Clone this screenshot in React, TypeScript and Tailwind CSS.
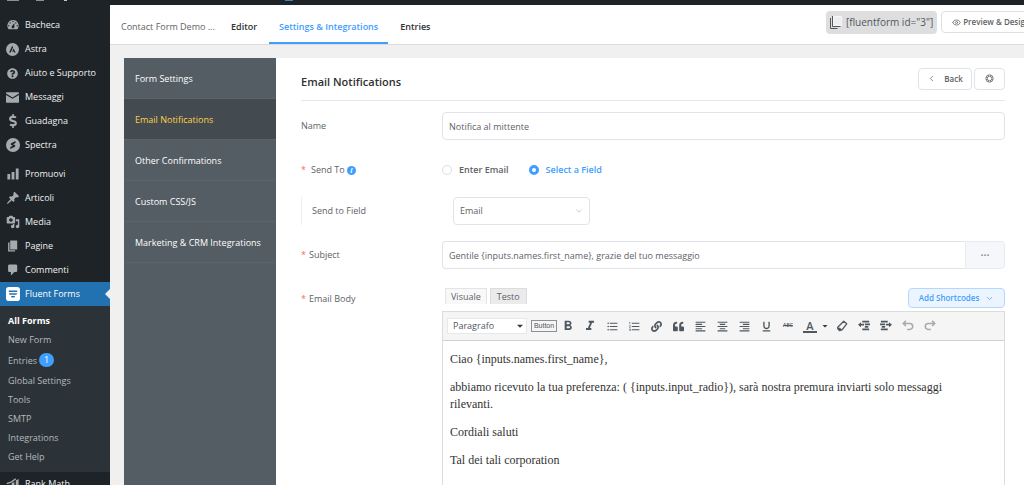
import type { ReactNode } from 'react'
import {
    MdFormatBold,
    MdFormatItalic,
    MdFormatListBulleted,
    MdFormatListNumbered,
    MdFormatAlignLeft,
    MdFormatAlignCenter,
    MdFormatAlignRight,
    MdFormatUnderlined,
    MdArrowDropDown
} from 'react-icons/md'
import { FaQuestionCircle, FaDollarSign, FaLink, FaQuoteLeft } from 'react-icons/fa'
import { LuChevronDown, LuChevronLeft, LuEye } from 'react-icons/lu'

const Dash = ({ d }: { d: string }) => (
    <svg viewBox="0 0 20 20" className="w-[14px] h-[14px]" fill="currentColor">
        <path d={d} />
    </svg>
)

const dashboardPath = 'M3.76 16h12.48A7.998 7.998 0 0 0 10 3a7.998 7.998 0 0 0-6.24 13zM10 4c.55 0 1 .45 1 1s-.45 1-1 1-1-.45-1-1 .45-1 1-1zM6 6c.55 0 1 .45 1 1s-.45 1-1 1-1-.45-1-1 .45-1 1-1zm8 0c.55 0 1 .45 1 1s-.45 1-1 1-1-.45-1-1 .45-1 1-1zm-5.37 5.55L12 7v6c0 1.1-.9 2-2 2s-2-.9-2-2c0-.57.24-1.08.63-1.45zM4 10c.55 0 1 .45 1 1s-.45 1-1 1-1-.45-1-1 .45-1 1-1zm12 0c.55 0 1 .45 1 1s-.45 1-1 1-1-.45-1-1 .45-1 1-1z'
const pinPath = 'M10.44 3.02l1.82-1.82 6.36 6.35-1.83 1.82c-1.05-.68-2.48-.57-3.41.36l-.75.75c-.92.93-1.04 2.35-.35 3.41l-1.83 1.82-2.41-2.41-2.8 2.79c-.42.42-3.38 2.71-3.8 2.29s1.86-3.39 2.28-3.81l2.79-2.79L4.1 9.36l1.83-1.82c1.05.69 2.48.57 3.4-.36l.75-.75c.93-.92 1.05-2.35.36-3.41z'
const mediaPath = 'M13 11V4c0-.55-.45-1-1-1h-1.67L9 1H5L3.67 3H2c-.55 0-1 .45-1 1v7c0 .55.45 1 1 1h10c.55 0 1-.45 1-1zM7 4.5c1.38 0 2.5 1.12 2.5 2.5S8.38 9.5 7 9.5 4.5 8.38 4.5 7 5.62 4.5 7 4.5zM14 6h5v10.5c0 1.38-1.12 2.5-2.5 2.5S14 17.88 14 16.5s1.12-2.5 2.5-2.5c.17 0 .34.02.5.05V9h-3V6zm-4 8.05V13h2v3.5c0 1.38-1.12 2.5-2.5 2.5S7 17.88 7 16.5 8.12 14 9.5 14c.17 0 .34.02.5.05z'

const astraIcon = (
    <svg viewBox="0 0 20 20" className="w-[13px] h-[13px]">
        <circle cx="10" cy="10" r="10" fill="currentColor" />
        <path d="M9.6 3.8 4.8 14.6h2.5l3.5-7.8zM11.6 8.6l-2.1 4.4h2.2l.7 1.6h2.4z" fill="#1d2327" />
    </svg>
)

const spectraIcon = (
    <svg viewBox="0 0 20 20" className="w-[14px] h-[14px]">
        <circle cx="10" cy="10" r="10" fill="currentColor" />
        <path d="M13.6 4.2 8 7c-1.6.9-1.6 2.6 0 3.2l2.2.7-4 1.9v3l5.8-2.9c1.7-.9 1.7-2.6 0-3.2l-2.2-.7 3.8-1.9z" fill="#1d2327" />
    </svg>
)

const fluentIcon = (
    <svg viewBox="0 0 20 20" className="w-[14px] h-[14px]">
        <rect width="20" height="20" rx="4" fill="#fff" />
        <path d="M4 5h12v2H4zM4 9h12l-1.2 2H5.2zM7 13h6l-1.2 2H8.2z" fill="#2271b1" />
    </svg>
)

const rankMathIcon = (
    <svg viewBox="0 0 20 20" className="w-[14px] h-[14px]" fill="currentColor">
        <path d="M2 12l4-1v7H2zM8 9l4-2v11H8zM14 5l4-2v15h-4z" />
        <path d="M1 9.500 8 7l6-4.500" fill="none" stroke="currentColor" strokeWidth="2" />
    </svg>
)

const mainMenu = [
    { label: 'Bacheca', icon: <Dash d={dashboardPath} /> },
    { label: 'Astra', icon: astraIcon },
    { label: 'Aiuto e Supporto', icon: <FaQuestionCircle size={11} /> },
    { label: 'Messaggi', icon: (
        <svg viewBox="0 0 20 16" className="w-[13px] h-[11px]" fill="currentColor">
            <path d="M1 0h18a1 1 0 0 1 1 1v1l-10 6L0 2V1a1 1 0 0 1 1-1zM0 4l10 6 10-6v11a1 1 0 0 1-1 1H1a1 1 0 0 1-1-1z" />
        </svg>
    ) },
    { label: 'Guadagna', icon: <FaDollarSign size={14} /> },
    { label: 'Spectra', icon: spectraIcon }
]

const contentMenu = [
    { label: 'Promuovi', icon: <Dash d="M18 18V2h-4v16h4zm-6 0V7H8v11h4zm-6 0v-8H2v8h4z" /> },
    { label: 'Articoli', icon: <Dash d={pinPath} /> },
    { label: 'Media', icon: <Dash d={mediaPath} /> },
    { label: 'Pagine', icon: <Dash d="M6 15V2h10v13H6zm-1 1h8v2H3V5h2v11z" /> },
    { label: 'Commenti', icon: <Dash d="M5 2h9c1.1 0 2 .9 2 2v7c0 1.1-.9 2-2 2h-2l-5 5v-5H5c-1.1 0-2-.9-2-2V4c0-1.1.9-2 2-2z" /> }
]

const subMenu = ['All Forms', 'New Form', 'Entries', 'Global Settings', 'Tools', 'SMTP', 'Integrations', 'Get Help']

const settingsMenu = ['Form Settings', 'Email Notifications', 'Other Confirmations', 'Custom CSS/JS', 'Marketing & CRM Integrations']

function MenuItem({ label, icon }: { label: string; icon: ReactNode }) {
    return (
        <a href="#" className="flex items-center h-6 pl-1 text-[#f0f0f1]">
            <span className="w-[17px] mr-1 flex justify-center text-[#a7aaad]">{icon}</span>
            {label}
        </a>
    )
}

function AdminBar() {
    return (
        <div className="flex items-start h-[5px] shrink-0 pl-[7px] bg-[#1d2327]">
            <span className="w-3 h-px mr-[17px] bg-[#8c8f94]"></span>
            <span className="w-2 h-px mr-5 bg-[#8c8f94]"></span>
            <span className="w-[3px] h-px mr-[218px] bg-[#c3c4c7]"></span>
            <span className="w-2 h-px bg-[#3d7fb5]"></span>
        </div>
    )
}

function AdminMenu() {
    return (
        <nav className="w-[110px] shrink-0 pt-2 bg-[#1d2327] text-[9px] whitespace-nowrap">
            {mainMenu.map((item) => <MenuItem key={item.label} {...item} />)}
            <div className="h-[5px]"></div>
            {contentMenu.map((item) => <MenuItem key={item.label} {...item} />)}

            <a href="#" className="relative flex items-center h-6 pl-1 bg-[#2271b1] text-white">
                <span className="w-[17px] mr-1 flex justify-center">{fluentIcon}</span>
                Fluent Forms
                <span className="absolute right-0 top-[7px] border-y-5 border-r-5 border-y-transparent border-r-[#f0f0f1]"></span>
            </a>
            <div className="bg-[#2c3338] pt-[5px] pb-[6px] pl-2 leading-[19px] text-[#b4b9be]">
                {subMenu.map((label, index) => (
                    <a key={label} href="#" className={`flex items-center ${index === 0 ? 'font-bold text-white' : ''}`}>
                        {label}
                        {label === 'Entries' && (
                            <span className="my-1 ml-[2px] px-[5px] rounded-full bg-[#409eff] text-white leading-[14px]">1</span>
                        )}
                    </a>
                ))}
            </div>
            <MenuItem label="Rank Math" icon={rankMathIcon} />
        </nav>
    )
}

function TopBar() {
    return (
        <header className="flex h-10 shrink-0 bg-white border-b border-[#dcdcde] overflow-hidden whitespace-nowrap text-[9px]">
            <span className="w-[109px] shrink-0 pl-[11px] pt-1 self-center text-[#606266]">Contact Form Demo ...</span>
            <nav className="flex shrink-0 font-semibold text-[#303133]">
                <a href="#" className="flex items-center px-3 pt-1">Editor</a>
                <a href="#" className="flex items-center px-[10px] pt-[6px] text-[#409eff] border-b-2 border-[#409eff]">Settings &amp; Integrations</a>
                <a href="#" className="flex items-center px-3 pt-1">Entries</a>
            </nav>
            <div className="flex items-start gap-1 ml-auto -mr-[17px] pt-[6px] shrink-0">
                <button className="flex items-center h-[23px] px-1 rounded-sm bg-[#dedede] text-[10px] text-[#50575e]">
                    <svg viewBox="0 0 12 13" className="w-3 h-[13px] mr-1" fill="none" stroke="#50575e">
                        <path d="M3.5.5h8v9h-8z" fill="#eee" stroke="#f6f6f6" />
                        <path d="M2.500 0v10.500h8M.5 2v10.500h7" />
                    </svg>
                    [fluentform id="3"]
                </button>
                <button className="flex items-center h-[22px] px-[10px] border border-[#dcdfe6] rounded-sm text-[8px] font-semibold text-[#606266]">
                    <LuEye size={9} className="mr-[2px]" />
                    Preview &amp; Design
                </button>
            </div>
        </header>
    )
}

function Label({ htmlFor, required, children }: { htmlFor?: string; required?: boolean; children: ReactNode }) {
    return (
        <label htmlFor={htmlFor} className="w-[141px] shrink-0 flex items-center">
            {required && <span className="mr-[3px] text-[#f56c6c]">*</span>}
            {children}
        </label>
    )
}

const toolbar = [
    { name: 'Bold', icon: <MdFormatBold size={16} /> },
    { name: 'Italic', icon: <MdFormatItalic size={16} /> },
    { name: 'Bulleted list', icon: <MdFormatListBulleted size={13} /> },
    { name: 'Numbered list', icon: <MdFormatListNumbered size={13} /> },
    { name: 'Link', icon: <FaLink size={11} /> },
    { name: 'Blockquote', icon: <FaQuoteLeft size={11} /> },
    { name: 'Align left', icon: <MdFormatAlignLeft size={13} /> },
    { name: 'Align center', icon: <MdFormatAlignCenter size={13} /> },
    { name: 'Align right', icon: <MdFormatAlignRight size={13} /> },
    { name: 'Underline', icon: <MdFormatUnderlined size={13} /> },
    { name: 'Strikethrough', icon: <span className="text-[5px] font-semibold line-through">ABC</span> },
    { name: 'Text color', icon: <span className="w-[14px] border-b-2 text-[11px] leading-[11px] font-semibold text-center">A</span> }
]

const toolbarEnd = [
    { name: 'Clear formatting', icon: (
        <svg viewBox="0 0 14 14" className="w-3 h-3" fill="none" stroke="currentColor" strokeWidth="1.500" strokeLinejoin="round">
            <path d="M9 1.500 12.500 4.500 7 11.500 4 12.500 2 10V8.500z" />
            <path d="M2.500 9.500 6 11.500" strokeWidth="2.500" />
        </svg>
    ) },
    { name: 'Decrease indent', icon: (
        <svg viewBox="0 0 14 14" className="w-3 h-3" fill="currentColor">
            <path d="M5 1h8v2H5zM8 4h6v2H8zM8 7h4v2H8zM5 10h8v2H5zM0 5.500 3.500 2.500v2H7v2H3.500v2z" />
        </svg>
    ) },
    { name: 'Increase indent', icon: (
        <svg viewBox="0 0 14 14" className="w-3 h-3" fill="currentColor">
            <path d="M1 1h8v2H1zM0 4h6v2H0zM2 7h4v2H2zM1 10h8v2H1zM14 5.500 10.500 2.500v2H7v2h3.500v2z" />
        </svg>
    ) },
    { name: 'Undo', icon: (
        <svg viewBox="0 0 14 14" className="w-3 h-3 text-[#a7aaad]" fill="none" stroke="currentColor" strokeWidth="1.800">
            <path d="M4.500 1 1.500 4l3 3M1.500 4H9a3.500 3.500 0 0 1 0 7H6" />
        </svg>
    ) },
    { name: 'Redo', icon: (
        <svg viewBox="0 0 14 14" className="w-3 h-3 text-[#a7aaad]" fill="none" stroke="currentColor" strokeWidth="1.800">
            <path d="M9.500 1l3 3-3 3M12.500 4H5a3.500 3.500 0 0 0 0 7h3" />
        </svg>
    ) }
]

function ToolButton({ name, icon }: { name: string; icon: ReactNode }) {
    return (
        <button aria-label={name} className="flex w-[22px] shrink-0 items-center justify-center">{icon}</button>
    )
}

function Editor() {
    return (
        <div className="flex-1 flex flex-col border border-[#dcdcde] border-b-0">
            <div className="flex items-center h-[29px] shrink-0 pl-1 bg-[#f5f5f5] border-b border-[#d0d0d2] text-[#50575e]">
                <div className="relative w-20 shrink-0">
                    <select aria-label="Paragraph style" className="w-full h-4 pl-[5px] appearance-none bg-white border border-[#e8e8e8] text-[9px] leading-[14px]">
                        <option>Paragrafo</option>
                    </select>
                    <MdArrowDropDown size={14} className="absolute right-0 top-px pointer-events-none text-[#32373c]" />
                </div>
                <button className="ml-1 h-3 w-[26px] shrink-0 flex items-center justify-center border border-[#8c8f94] font-['Liberation_Sans'] text-[7px]">Button</button>
                {toolbar.map((tool) => <ToolButton key={tool.name} {...tool} />)}
                <MdArrowDropDown size={12} className="shrink-0 -ml-[2px] text-[#32373c]" />
                {toolbarEnd.map((tool) => <ToolButton key={tool.name} {...tool} />)}
            </div>
            <div className="pl-[7px] pr-8 pt-[10px] font-['Liberation_Serif',serif] text-[12px] leading-[17px] text-[#333]">
                <p className="mb-[11px]">{'Ciao {inputs.names.first_name},'}</p>
                <p className="mb-[11px]">{'abbiamo ricevuto la tua preferenza: ( {inputs.input_radio}), sarà nostra premura inviarti solo messaggi rilevanti.'}</p>
                <p className="mb-[11px]">Cordiali saluti</p>
                <p>Tal dei tali corporation</p>
            </div>
        </div>
    )
}

function NotificationForm() {
    return (
        <main className="flex-1 min-w-0 flex flex-col bg-white pl-[25px] pr-[19px] pt-[10px] text-[9px] text-[#606266]">
            <div className="flex items-center h-[33px] pb-[11px] border-b border-[#e4e7ed]">
                <h2 className="mr-auto pt-[7px] text-[11px] font-semibold text-[#303133]">Email Notifications</h2>
                <button className="flex items-center justify-center gap-2 w-[54px] h-[22px] mr-[2px] border border-[#e0e3e9] rounded-sm text-[8px] font-semibold">
                    <LuChevronLeft size={9} />
                    Back
                </button>
                <button aria-label="Help" className="flex items-center justify-center w-[31px] h-[22px] border border-[#e0e3e9] rounded-sm">
                    <svg viewBox="0 0 16 16" className="w-[9px] h-[9px]" fill="none" stroke="currentColor" strokeWidth="1.200">
                        <circle cx="8" cy="8" r="6.500" />
                        <circle cx="8" cy="8" r="4" />
                        <path d="M6 1.500V5M10 1.500V5M6 11v3.500M10 11v3.500M1.500 6H5M1.500 10H5M11 6h3.500M11 10h3.500" />
                    </svg>
                </button>
            </div>

            <div className="flex mt-[11px]">
                <Label htmlFor="name">Name</Label>
                <input id="name" defaultValue="Notifica al mittente" className="flex-1 h-7 px-[6px] border border-[#e0e3e9] rounded-sm" />
            </div>

            <div className="flex items-center h-5 mt-5">
                <Label required>
                    <span className="pl-[2px]">Send To</span>
                    <span className="ml-[2px] size-[9px] rounded-full bg-[#409eff] text-white text-[7px] leading-[9px] text-center italic font-bold">i</span>
                </Label>
                <label className="flex items-center mr-5 font-semibold">
                    <input type="radio" name="sendTo" className="appearance-none size-[10px] mr-[7px] rounded-full border border-[#dcdfe6]" />
                    Enter Email
                </label>
                <label className="flex items-center font-semibold text-[#409eff]">
                    <input type="radio" name="sendTo" defaultChecked className="appearance-none size-[10px] mr-[7px] rounded-full border-[3px] border-[#409eff] bg-white" />
                    Select a Field
                </label>
            </div>

            <div className="flex mt-[17px] pl-[10px] border-l border-[#ebeef5]">
                <Label htmlFor="field">Send to Field</Label>
                <div className="relative w-[137px]">
                    <select id="field" className="w-full h-7 px-[6px] appearance-none border border-[#e0e3e9] rounded-sm">
                        <option>Email</option>
                    </select>
                    <LuChevronDown size={10} className="absolute right-[6px] top-[9px] text-[#c0c4cc] pointer-events-none" />
                </div>
            </div>

            <div className="flex mt-4">
                <Label htmlFor="subject" required>Subject</Label>
                <input id="subject" defaultValue="Gentile {inputs.names.first_name}, grazie del tuo messaggio" className="flex-1 h-7 px-[6px] border border-r-0 border-[#e0e3e9] rounded-l-sm" />
                <button aria-label="Insert shortcode" className="w-10 border border-[#e8ebf0] rounded-r-sm bg-[#f5f7fa] text-[8px] text-[#909399]">•••</button>
            </div>

            <div className="flex flex-1 mt-[19px]">
                <div className="w-[141px] shrink-0 pt-1">
                    <Label required>Email Body</Label>
                </div>
                <div className="flex-1 flex flex-col">
                    <div className="flex items-start justify-between mb-[3px] pl-[3px]">
                        <div className="flex gap-[3px] leading-[15px]">
                            <button className="px-[5px] border border-b-0 border-[#e4e4e4] bg-[#f8f8f8]">Visuale</button>
                            <button className="px-[6px] border border-b-0 border-[#dcdcde] bg-[#ebebeb]">Testo</button>
                        </div>
                        <button className="flex items-center justify-center gap-[6px] w-[97px] h-5 border border-[#b3d8ff] rounded-sm bg-[#ecf5ff] text-[8px] font-semibold text-[#409eff]">
                            Add Shortcodes
                            <LuChevronDown size={9} />
                        </button>
                    </div>
                    <Editor />
                </div>
            </div>
        </main>
    )
}

export default function App() {
    return (
        <div className="h-screen flex flex-col overflow-hidden bg-[#f0f0f1] font-['Open_Sans',sans-serif]">
            <AdminBar />
            <div className="flex flex-1 min-h-0">
                <AdminMenu />
                <div className="flex-1 min-w-0 flex flex-col">
                    <TopBar />
                    <div className="flex flex-1 min-h-0 pl-[14px] pt-[13px]">
                        <aside className="w-[152px] shrink-0 bg-[#545c64] text-[9px] text-white whitespace-nowrap">
                            {settingsMenu.map((label) => (
                                <a
                                    key={label}
                                    href="#"
                                    className={`flex items-center h-[41px] pl-[11px] pt-[2px] border-b border-[#5b636b] ${label === 'Email Notifications' ? 'bg-[#434a50] text-[#ffd04b]' : ''}`}
                                >
                                    {label}
                                </a>
                            ))}
                        </aside>
                        <NotificationForm />
                    </div>
                </div>
            </div>
        </div>
    )
}
